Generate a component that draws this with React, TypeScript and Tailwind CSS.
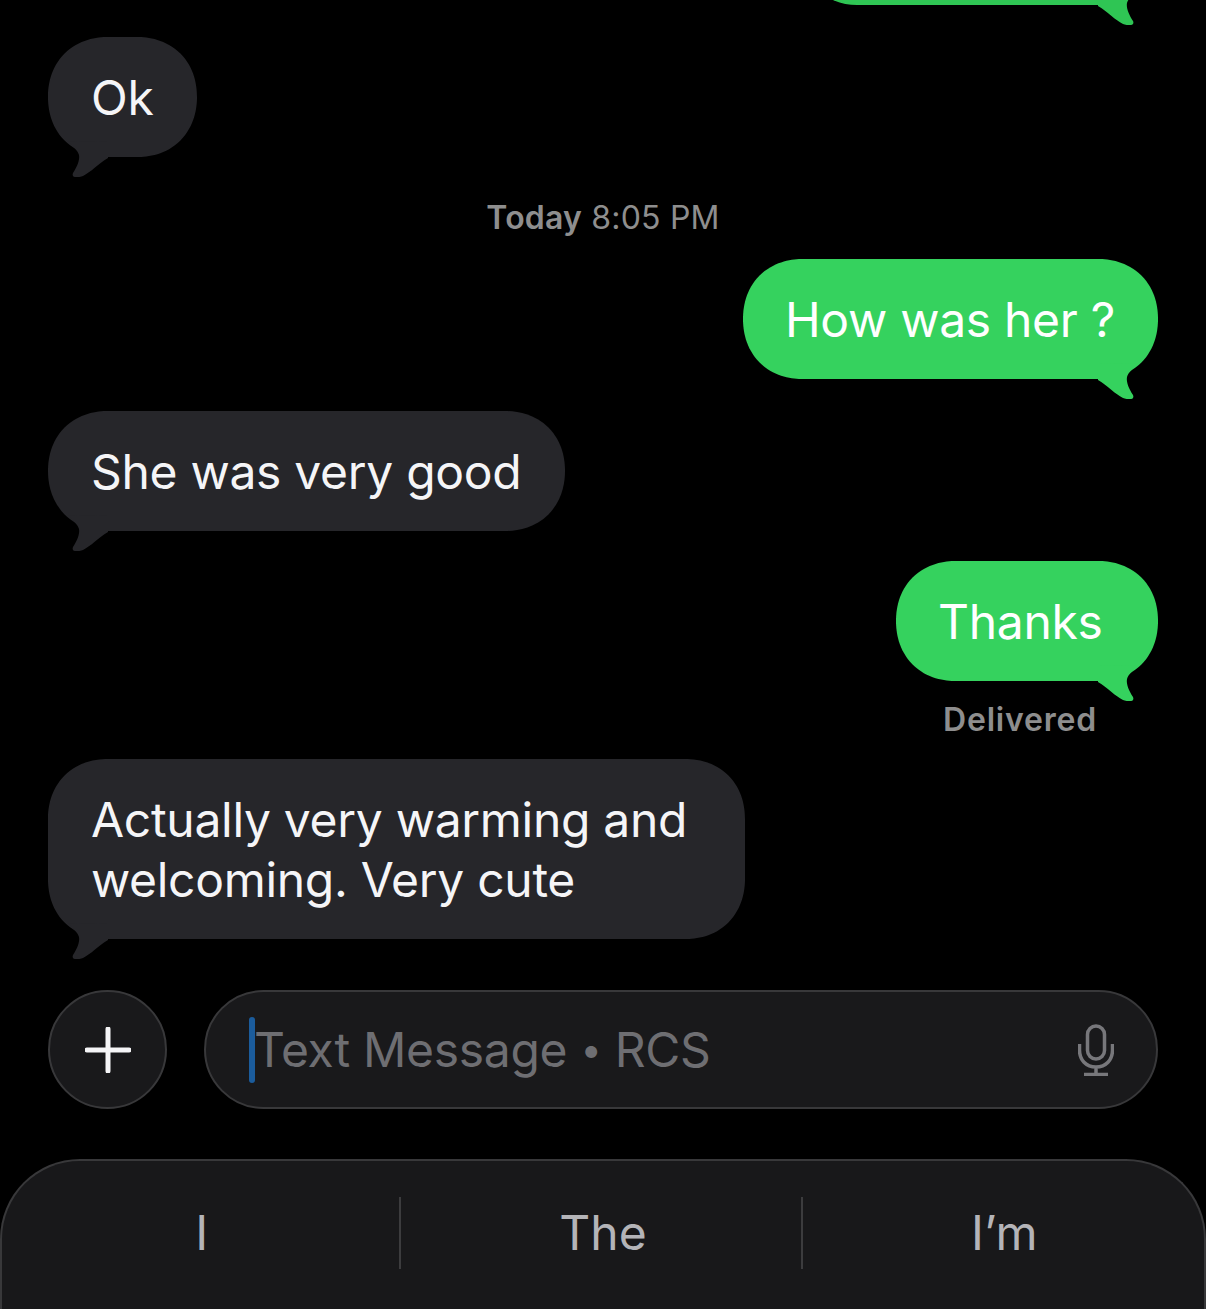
const font = { fontFamily: "Inter, 'Noto Sans', sans-serif" };

function Tail({ color, flip }: { color: string; flip?: boolean }) {
  return (
    <svg
      viewBox="0 0 70 40"
      width={70}
      height={40}
      className={`absolute -bottom-5 ${flip ? "right-0 -scale-x-100" : "left-0"}`}
    >
      <path
        d="M20 4C25 9 30 14 31 18C32 23 29 30 25 36C24 38 25 40 27 40C30 40 33 40 35 39C43 35 50 27 60 21L60 5Z"
        fill={color}
      />
    </svg>
  );
}

function Received({ lines, className }: { lines: string[]; className: string }) {
  return (
    <div className={`relative self-start rounded-[60px] bg-[#26262a] pt-[31px] pr-[42px] pb-[29px] pl-[43px] text-[48px] leading-[60px] tracking-[-0.3px] text-[#f5f5f7] [corner-shape:superellipse(1.1)] ${className}`}>
      {lines.map((l) => (
        <div key={l} className="whitespace-nowrap">{l}</div>
      ))}
      <Tail color="#26262a" />
    </div>
  );
}

function Sent({ text, className }: { text: string; className: string }) {
  return (
    <div className={`relative self-end rounded-[60px] bg-[#35d25e] pt-[31px] pb-[29px] pl-[42px] text-[48px] leading-[60px] tracking-[-0.3px] whitespace-nowrap text-white [corner-shape:superellipse(1.1)] ${className}`}>
      {text}
      <Tail color="#35d25e" flip />
    </div>
  );
}

export default function App() {
  return (
    <div className="flex h-[1309px] flex-col overflow-hidden bg-black" style={font}>
      <div className="flex flex-col px-12">
        <div className="relative -mt-[115px] h-[120px] w-[361px] self-end rounded-[60px] bg-[#2fc554]">
          <Tail color="#2fc554" flip />
        </div>

        <Received lines={["Ok"]} className="mt-8 w-[149px]" />

        <div className="mt-[45px] text-center text-[32px] leading-[32px] tracking-[0.2px] text-[#8e8e8e]">
          <span className="font-semibold">Today</span> 8:05 PM
        </div>

        <Sent text="How was her ?" className="mt-[25px] w-[415px]" />
        <Received lines={["She was very good"]} className="mt-8 w-[517px]" />
        <Sent text="Thanks" className="mt-[30px] w-[262px]" />

        <div className="mt-[23px] mr-[61px] self-end text-[32px] leading-[32px] font-semibold tracking-[0.8px] text-[#8e8e8e]">
          Delivered
        </div>

        <Received
          lines={["Actually very warming and", "welcoming. Very cute"]}
          className="mt-[23px] w-[697px]"
        />

        <div className="mt-[51px] flex items-center gap-[37px]">
          <div className="flex h-[119px] w-[119px] shrink-0 items-center justify-center rounded-full border-2 border-[#38383a] bg-[#19191b]">
            <svg viewBox="0 0 46 46" width={46} height={46}>
              <path d="M23 2V44M2 23H44" stroke="#f5f5f7" strokeWidth={5} strokeLinecap="round" />
            </svg>
          </div>
          <div className="relative flex h-[119px] flex-1 items-center rounded-[60px] border-2 border-[#38383a] bg-[#19191b] pr-[42px] pl-12">
            <div className="absolute top-[25px] left-[43px] h-[66px] w-[6px] rounded-full bg-[#1b5c9c]" />
            <span className="flex-1 text-[48px] leading-[60px] tracking-[-0.3px] text-[#6e6e72]">
              Text Message <span className="align-[4px] text-[38px] leading-none">•</span> RCS
            </span>
            <svg viewBox="0 0 36 52" width={36} height={52}>
              <rect x="9.5" y="2" width="17" height="33" rx="8.5" fill="none" stroke="#77777b" strokeWidth={3.5} />
              <path d="M1.5 20V26C1.5 36 8 43 18 43C28 43 34.5 36 34.5 26V20M18 43V50M6 50.5H30" fill="none" stroke="#77777b" strokeWidth={3.5} />
            </svg>
          </div>
        </div>
      </div>

      <div className="mt-[50px] flex h-[170px] items-start rounded-t-[80px] border-t-2 border-r-2 border-l-2 border-[#38383a] bg-[#18181a] pt-9 text-[48px] text-[#b4b4b8]">
        <div className="flex h-[72px] flex-1 items-center justify-center">I</div>
        <div className="h-[72px] w-[2px] -translate-x-0.5 bg-[#3c3c3e]" />
        <div className="flex h-[72px] flex-1 items-center justify-center">The</div>
        <div className="h-[72px] w-[2px] -translate-x-0.5 bg-[#3c3c3e]" />
        <div className="flex h-[72px] flex-1 items-center justify-center">I’m</div>
      </div>
    </div>
  );
}
